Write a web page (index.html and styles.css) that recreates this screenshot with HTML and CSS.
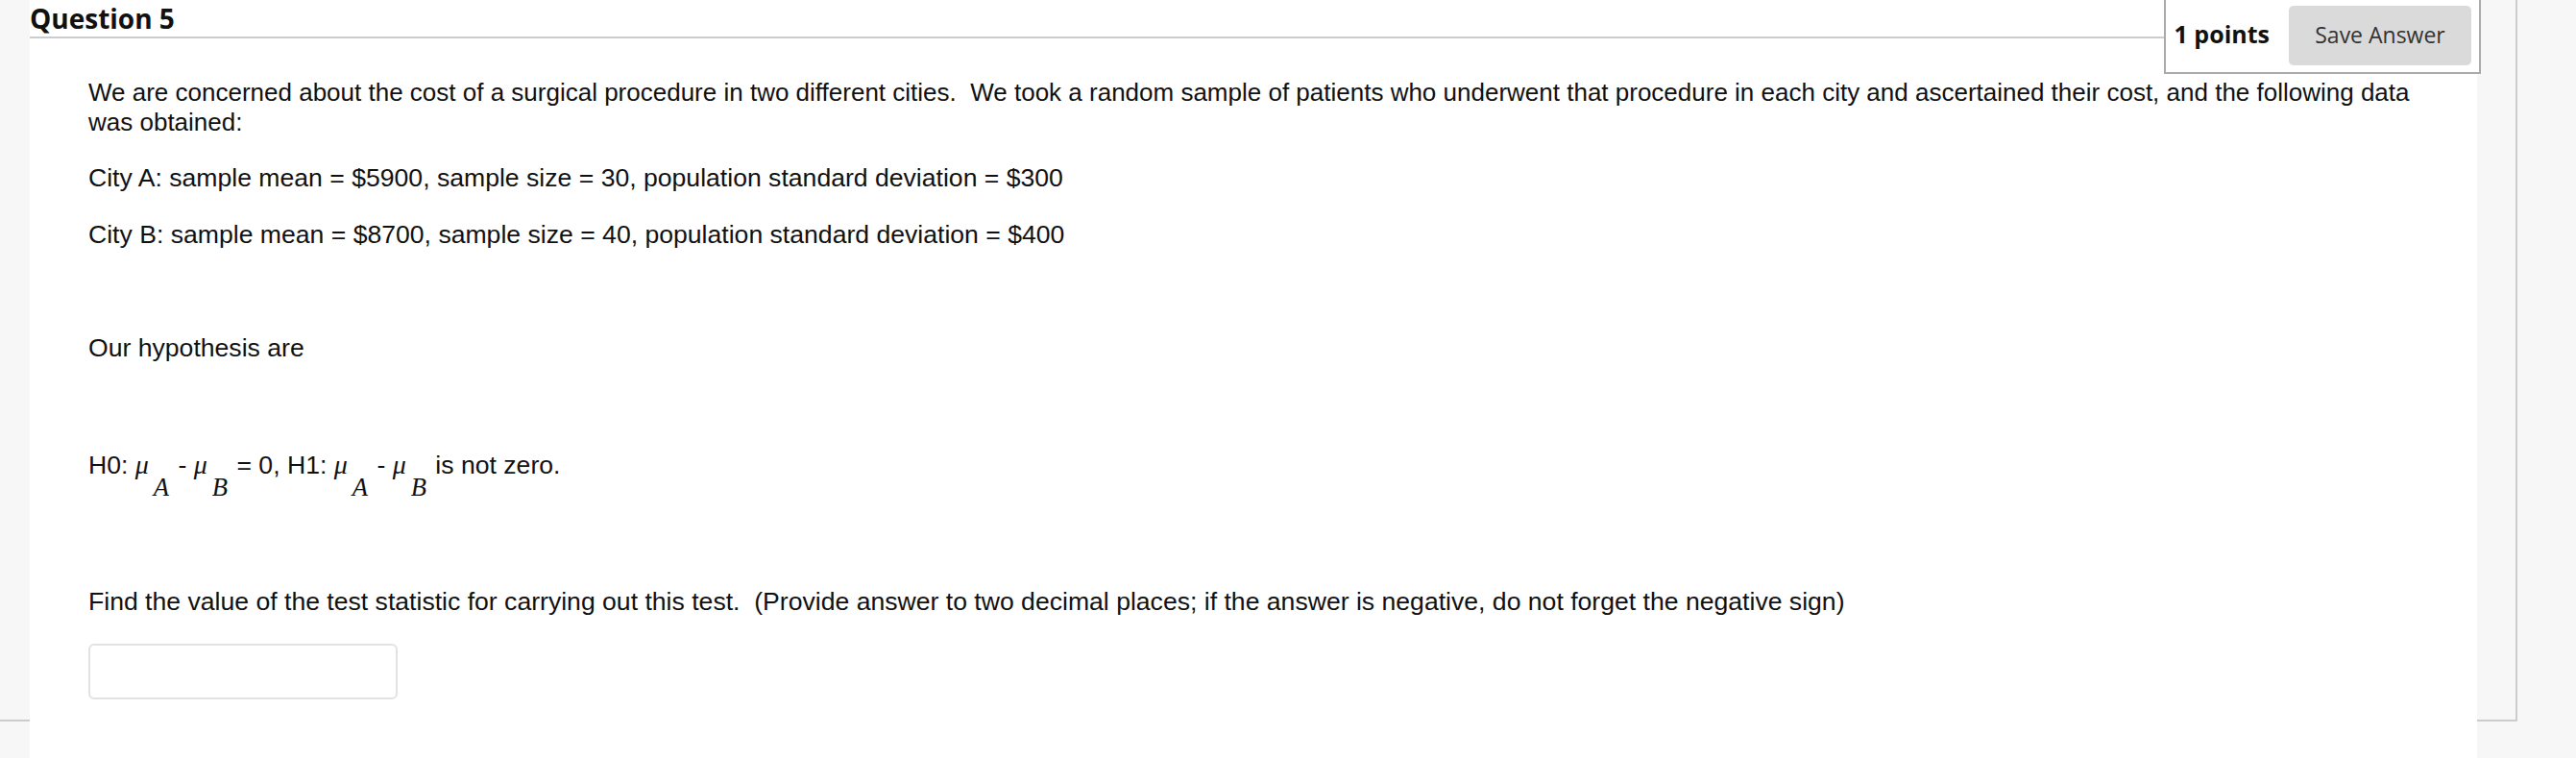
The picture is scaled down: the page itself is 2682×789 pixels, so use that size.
FILE: index.html
```html
<!DOCTYPE html>
<html lang="en">
<head>
<meta charset="utf-8">
<title>Question 5</title>
<link rel="stylesheet" href="styles.css">
</head>
<body>
<div class="frame">
  <div class="panel">
    <div class="q-header">
      <h3 class="q-title">Question 5</h3>
      <div class="q-points">
        <span class="points">1 points</span>
        <button class="save-btn" type="button">Save Answer</button>
      </div>
    </div>
    <div class="q-body">
      <p class="intro">We are concerned about the cost of a surgical procedure in two different cities.&nbsp; We took a random sample of patients who underwent that procedure in each city and ascertained their cost, and the following data was obtained:</p>
      <p>City A: sample mean = $5900, sample size = 30, population standard deviation = $300</p>
      <p>City B: sample mean = $8700, sample size = 40, population standard deviation = $400</p>
      <p>&nbsp;</p>
      <p>Our hypothesis are</p>
      <p>&nbsp;</p>
      <p class="hyp">H0: <span class="mu">μ</span><span class="sub">A</span> - <span class="mu">μ</span><span class="sub">B</span> = 0, H1: <span class="mu">μ</span><span class="sub">A</span> - <span class="mu">μ</span><span class="sub">B</span> is not zero.</p>
      <p>&nbsp;</p>
      <p>Find the value of the test statistic for carrying out this test.&nbsp; (Provide answer to two decimal places; if the answer is negative, do not forget the negative sign)</p>
      <input class="answer" type="text" aria-label="Answer">
    </div>
  </div>
</div>
</body>
</html>
```

FILE: styles.css
```css
html, body {
  margin: 0;
  padding: 0;
}

body {
  background: #f7f7f7;
  overflow: hidden;
  width: 2682px;
  height: 789px;
}

.frame {
  width: 2619px;
  height: 749px;
  border-right: 2px solid #cccccc;
  border-bottom: 2px solid #cccccc;
}

.panel {
  margin-left: 31px;
  width: 2548px;
  height: 789px;
  background: #ffffff;
}

.q-header {
  display: flex;
  align-items: flex-start;
  margin-right: -4px;
}

.q-title {
  flex: 1;
  margin: 0;
  height: 38px;
  font-family: "Open Sans", "Liberation Sans", sans-serif;
  font-weight: 700;
  font-size: 28px;
  line-height: 38px;
  color: #111111;
  border-bottom: 2px solid #cccccc;
}

.q-points {
  display: flex;
  align-items: center;
  gap: 20px;
  border: 2px solid #aaaaaa;
  border-top: none;
  padding: 6px 8px 7px 9px;
  background: #ffffff;
}

.points {
  font-family: "Open Sans", "Liberation Sans", sans-serif;
  font-weight: 700;
  font-size: 25px;
  color: #111111;
  margin-bottom: 5px;
}

.save-btn {
  width: 190px;
  height: 62px;
  border: none;
  border-radius: 5px;
  background: #dadada;
  color: #333333;
  font-family: "Open Sans", "Liberation Sans", sans-serif;
  font-size: 23px;
  padding: 0 0 3px 0;
}

.q-body {
  padding: 4px 30px 0 61px;
  font-family: "Liberation Sans", Arial, sans-serif;
  font-size: 26.6px;
  color: #111111;
}

.q-body p {
  margin: 0 0 28px 0;
}

.q-body .intro {
  font-size: 26px;
  line-height: 30.6px;
}

.q-body .hyp {
  padding-top: 3px;
  padding-bottom: 1px;
}

.mu {
  font-family: "Liberation Serif", "Times New Roman", serif;
  font-style: italic;
  font-size: 28px;
}

.sub {
  font-family: "Liberation Serif", "Times New Roman", serif;
  font-style: italic;
  font-size: 26.6px;
  vertical-align: -23px;
  margin-left: 5px;
  margin-right: 2px;
}

.answer {
  display: block;
  box-sizing: border-box;
  width: 322px;
  height: 58px;
  border: 2px solid #e2e2e2;
  border-radius: 6px;
  background: #ffffff;
  margin: 0;
}
```
